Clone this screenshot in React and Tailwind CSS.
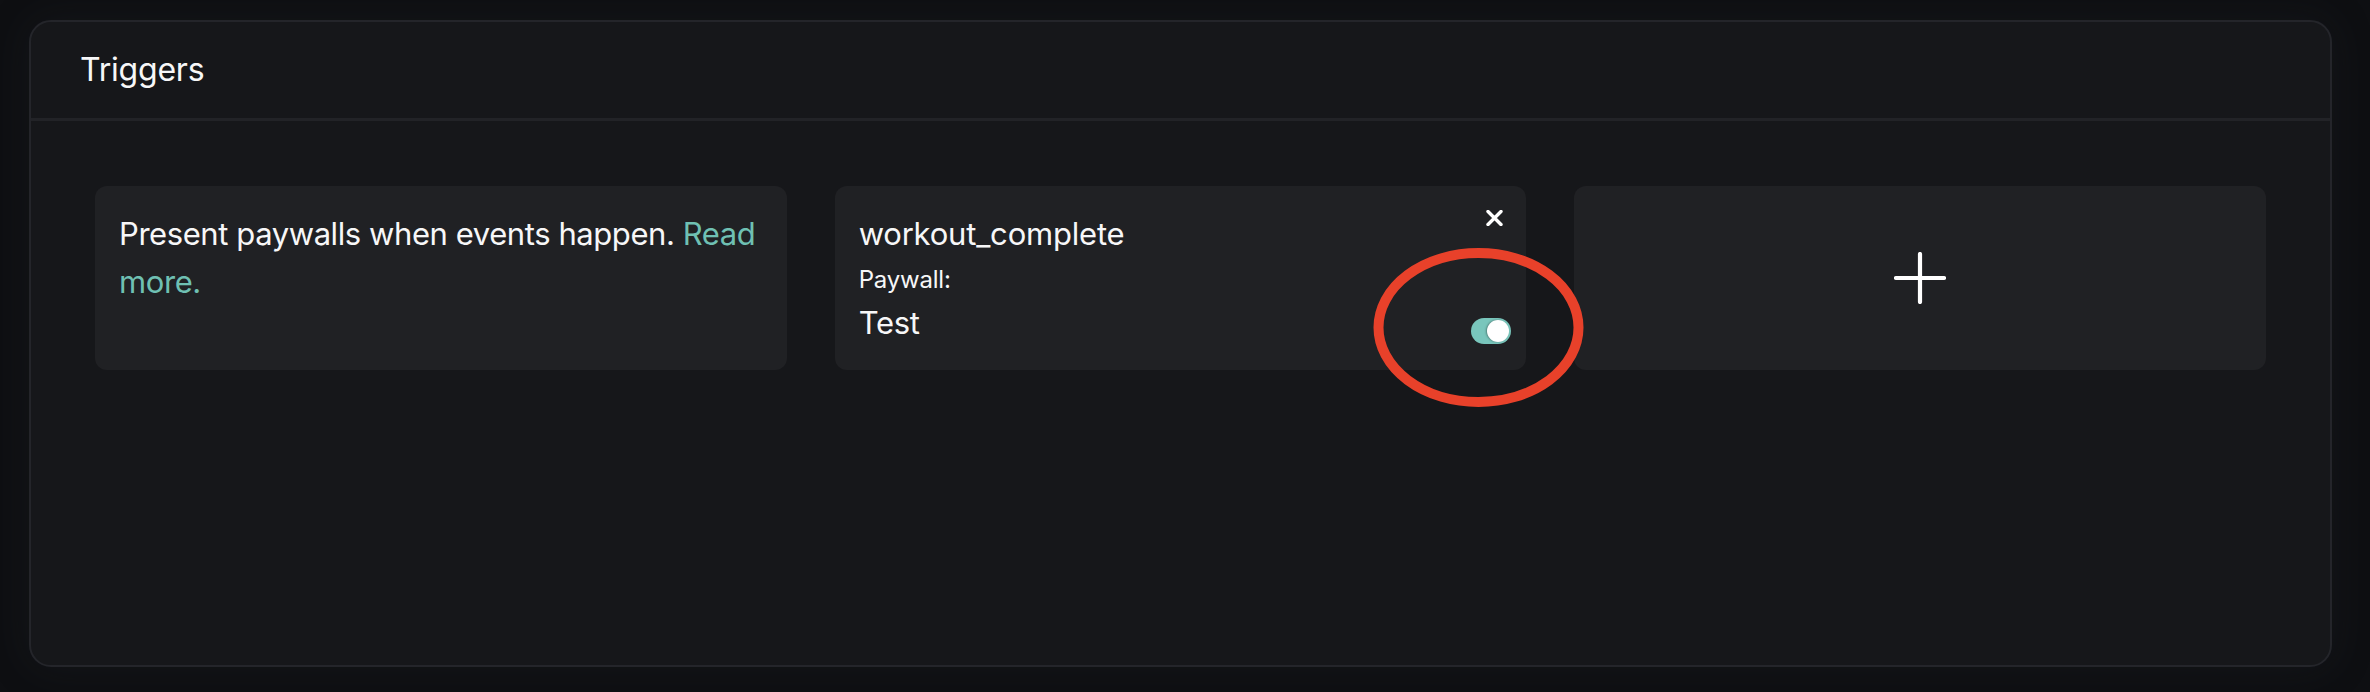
import React from "react";

function CloseIcon() {
  return (
    <svg width="17" height="16" viewBox="0 0 17 16" className="block shrink-0">
      <path d="M2 1.5 L15 14.5 M15 1.5 L2 14.5" stroke="#ffffff" strokeWidth="3.4" strokeLinecap="round" />
    </svg>
  );
}

function PlusIcon() {
  return (
    <svg width="52" height="52" viewBox="0 0 52 52" className="block">
      <path d="M26 2 V50 M2 26 H50" stroke="#ffffff" strokeWidth="4.2" strokeLinecap="round" />
    </svg>
  );
}

function Toggle() {
  return (
    <div className="-mr-[9px] mt-[16px] flex h-[26px] w-[40px] shrink-0 items-center justify-end rounded-full bg-[#79c6bc] px-[2px]">
      <div className="h-[22px] w-[22px] rounded-full bg-white shadow-[-1px_0_2px_rgba(0,0,0,0.35)]" />
    </div>
  );
}

export default function App() {
  return (
    <div
      className="relative min-h-[692px] w-full bg-[#0e0f12] pb-[25px] pl-[29px] pr-[38px] pt-[20px] text-[#f7f7f8]"
      style={{ fontFamily: "Inter, 'Noto Sans', 'Liberation Sans', sans-serif" }}
    >
      <div className="flex h-[647px] flex-col rounded-[22px] border-2 border-[#24252a] bg-[#16171a] shadow-[0_0_40px_rgba(40,42,48,0.25)]">
        <div className="flex h-[99px] shrink-0 items-center border-b-[3px] border-[#222327] pl-[49px]">
          <h2 className="text-[32px] font-normal leading-none tracking-[-0.2px]">Triggers</h2>
        </div>
        <div className="grid grid-cols-3 gap-[48px] px-[64px] pt-[65px]">
          <div className="h-[184px] rounded-[12px] bg-[#202124] p-[24px]">
            <p className="text-[31px] leading-[48px] tracking-[-0.42px]">
              Present paywalls when events happen.{" "}
              <a className="text-[#6fc0b3]">Read more.</a>
            </p>
          </div>
          <div className="flex h-[184px] flex-col rounded-[12px] bg-[#202124] p-[24px]">
            <div className="flex items-start justify-between">
              <span className="text-[31px] leading-[48px] tracking-[-0.2px]">workout_complete</span>
              <div className="mr-[-1px]">
                <CloseIcon />
              </div>
            </div>
            <span className="text-[24px] leading-[44px] tracking-[-0.2px]">Paywall:</span>
            <div className="flex items-center justify-between">
              <span className="text-[31px] leading-[40px] tracking-[-0.3px]">Test</span>
              <Toggle />
            </div>
          </div>
          <button className="flex h-[184px] items-center justify-center rounded-[12px] bg-[#202124]">
            <PlusIcon />
          </button>
        </div>
      </div>
      <svg
        className="pointer-events-none absolute left-[1373px] top-[248px]"
        width="212"
        height="160"
        viewBox="0 0 212 160"
      >
        <ellipse cx="105.5" cy="79.5" rx="100" ry="74.5" fill="none" stroke="#e8412a" strokeWidth="10" />
      </svg>
    </div>
  );
}
